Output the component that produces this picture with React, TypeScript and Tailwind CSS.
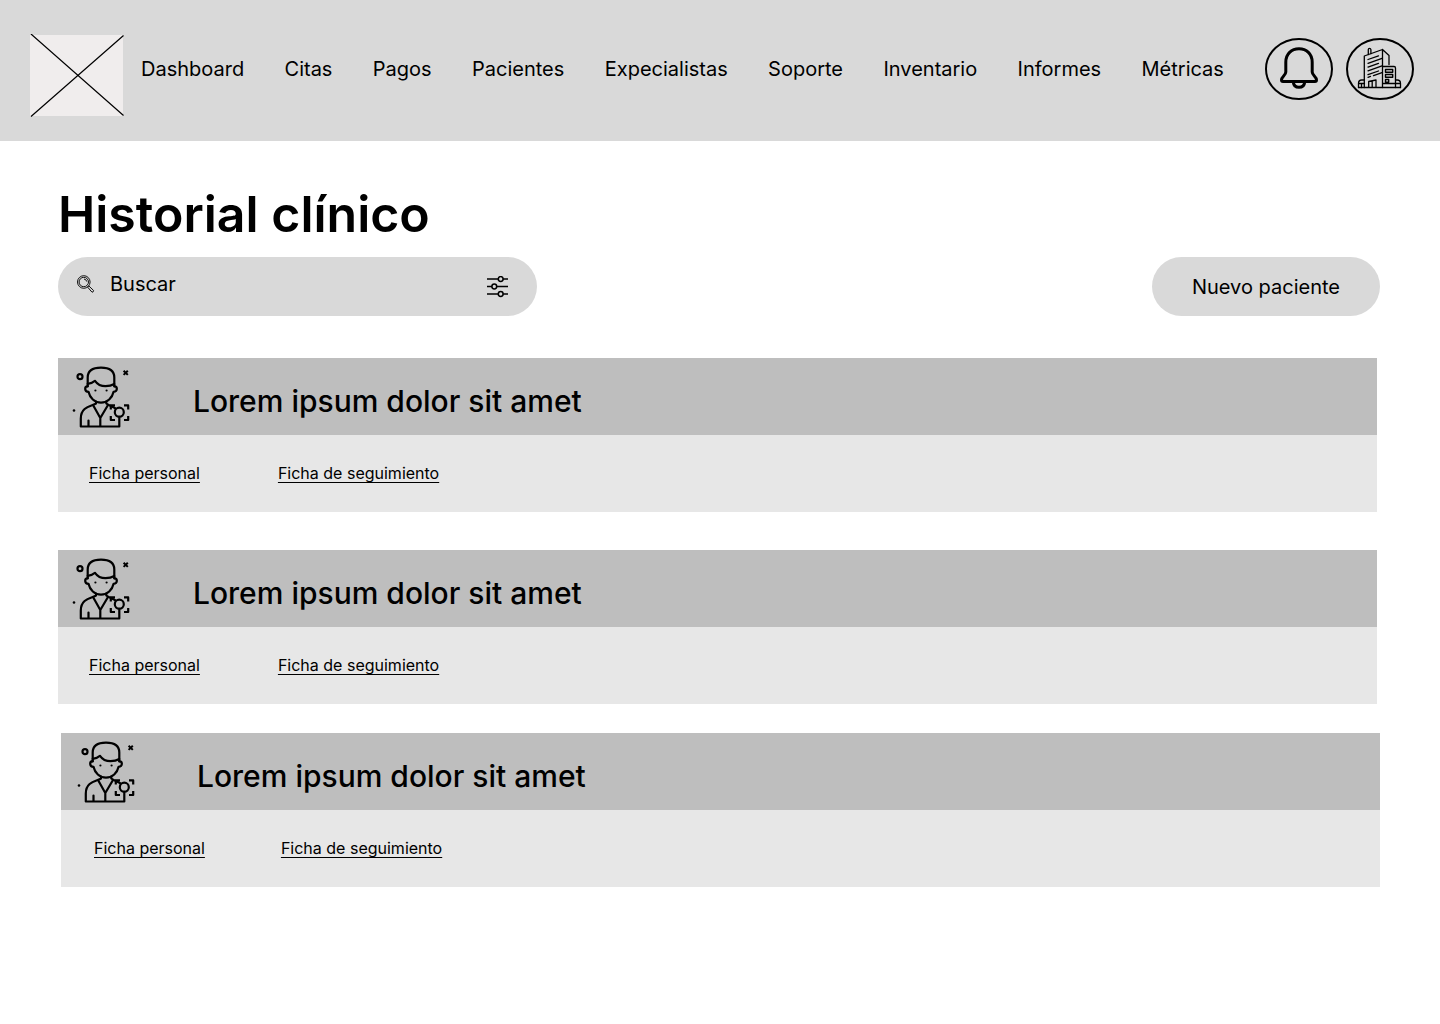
import React from "react";

const NAV = ["Dashboard", "Citas", "Pagos", "Pacientes", "Expecialistas", "Soporte", "Inventario", "Informes", "Métricas"];

function Logo() {
  return (
    <svg className="h-[83px] w-[94px] shrink-0" viewBox="0 0 94 83" fill="none" role="img" aria-label="Logo">
      <rect x="0" y="1" width="93" height="81" fill="#f0eded" />
      <path d="M1 0L93.5 81.5M1 82.5L93.5 1.5" stroke="#000" strokeWidth="1.2" />
    </svg>
  );
}

function BellIcon() {
  return (
    <svg className="h-[62px] w-[68px]" viewBox="0 0 68 62" fill="none" stroke="#000" aria-hidden="true">
      <ellipse cx="34" cy="31" rx="33" ry="30" strokeWidth="2" />
      <path
        d="M20.8 24.2C20.8 16 26.5 10.8 34 10.8S47.2 16 47.2 24.2V34C47.2 37.5 51.5 38.5 51.5 42C51.5 43 51 43.4 50 43.4H18C17 43.4 16.5 43 16.5 42C16.5 38.5 20.8 37.5 20.8 34Z"
        strokeWidth="3"
        strokeLinejoin="round"
      />
      <path d="M28.3 44C28.6 47.5 30.8 49.3 34 49.3S39.4 47.5 39.7 44" strokeWidth="3" />
    </svg>
  );
}

function BuildingIcon() {
  return (
    <svg className="h-[62px] w-[68px]" viewBox="0 0 68 62" fill="none" stroke="#000" aria-hidden="true">
      <ellipse cx="34" cy="31" rx="33" ry="30" strokeWidth="2" />
      <g strokeWidth="1.3" strokeLinejoin="round" strokeLinecap="round">
        <path d="M18.3 49.5V18L36.5 11.5V49.5M36.5 11.5L43 17.5V26.5" />
        <path d="M22.3 16.5V11.5Q22.3 10.3 23.5 10.3T24.9 11.5V15.7" />
        <path d="M22 21.5L32.5 17.8M22 25.3L36 20.3M22 29.1L32.5 25.4M22 32.9L36 27.9M22 36.7L32.5 33M27.5 37.7L36 34.7M22 39.3L24.5 38.4" />
        <path d="M37 28.5H48Q49.5 28.5 49.5 30V49.5" />
        <path d="M39.5 31.5H46.7V34.2H39.5ZM39.5 36.5H46.7V39.2H39.5ZM39.5 41.5H42.7V44.2H39.5Z" strokeWidth="1.4" />
        <path d="M12.5 49.5V45.5C12.5 43.2 14 42 15.8 42H18.5M12.5 45.5H18.5M15.5 45.5V49.5" />
        <path d="M49.5 42H51.2C53.2 42 54.5 43.3 54.5 45.5V49.5M49.5 45.5H54.5M37 45.5H49.5" />
        <path d="M22.7 49.5V43.5L30 42V49.5M26.2 43V49.5M12.5 49.5H54.5" />
      </g>
    </svg>
  );
}

function SearchIcon() {
  return (
    <svg className="h-[19px] w-[19px] shrink-0" viewBox="0 0 19 19" fill="none" stroke="#111" strokeWidth="1" aria-hidden="true">
      <circle cx="7.8" cy="7" r="6.3" />
      <circle cx="7.8" cy="7" r="4.7" />
      <path d="M8 4Q10.4 4.4 10.8 6.6M11.6 12.1L12.8 10.9L17.6 15.5Q17.6 17.2 16 17.2Z" />
    </svg>
  );
}

function FilterIcon() {
  return (
    <svg className="h-[22px] w-[22px]" viewBox="0 0 22 22" fill="none" stroke="#000" strokeWidth="1.5" aria-hidden="true">
      <path d="M0 3H11M16 3H21M0 10.5H5M10 10.5H21M0 18H11M16 18H21" />
      <circle cx="13.7" cy="3" r="2.4" />
      <circle cx="7.3" cy="10.5" r="2.4" />
      <circle cx="13.7" cy="18" r="2.4" />
    </svg>
  );
}

function PatientIcon() {
  return (
    <svg className="h-16 w-[60px] shrink-0" viewBox="0 0 60 64" fill="none" stroke="#000" strokeWidth="2.2" strokeLinecap="round" strokeLinejoin="round" aria-hidden="true">
      <circle cx="8" cy="11.7" r="2.5" />
      <path d="M51.6 5.7L55.8 9.9M55.8 5.7L51.6 9.9" strokeWidth="2" strokeLinecap="butt" />
      <circle cx="2" cy="45.5" r="1.3" fill="#000" stroke="none" />
      <path d="M15.7 21.5V12.5C15.7 5.5 21 2.7 29 2.7S42.3 5.5 42.3 12.5V21.5" />
      <path d="M15.7 18.8C18.5 18.6 21.3 17.5 23 15.8C25.5 19.4 29 21.2 33.5 21.2C37 21.2 40 20.4 42.3 19" />
      <path d="M15.7 21.2C12.2 21.6 12.3 26.5 16.5 26.8C17.8 32.8 22.6 37.7 29 37.7S40.3 32.8 41.6 26.8C45.8 26.5 45.8 21.6 42.3 21.2" />
      <circle cx="23.4" cy="25.5" r="1.1" fill="#000" stroke="none" />
      <circle cx="34.6" cy="25.5" r="1.1" fill="#000" stroke="none" />
      <path d="M24 36.5V38.5C20 41.2 8.8 41.2 8.8 53.5V61.5H47.3V52" />
      <path d="M34.3 36.5V38.5C37 40.7 40.5 41.7 43.5 43.5" />
      <path d="M21.3 40.5L28.3 53L35.7 40.5M28.3 53V61M16.5 55.5V61" />
      <circle cx="47.3" cy="47.2" r="4.5" />
      <path d="M38.8 44.4V40.4H43M52 40.4H56.2V44.4M38.8 51V55H43M52 55H56.2V51" strokeLinecap="butt" />
    </svg>
  );
}

type CardProps = { className: string; headClass: string; linksClass: string };

function PatientCard({ className, headClass, linksClass }: CardProps) {
  return (
    <article className={className}>
      <div className={`flex h-[77px] items-center bg-[#bebebe] ${headClass}`}>
        <PatientIcon />
        <h2 className="pt-2 text-[30px] leading-9 font-medium">Lorem ipsum dolor sit amet</h2>
      </div>
      <div className={`flex h-[77px] items-center bg-[#e7e7e7] pb-0.5 text-base underline-offset-3 ${linksClass}`}>
        <a href="#ficha-personal" className="underline [text-decoration-skip-ink:none]">Ficha personal</a>
        <a href="#ficha-seguimiento" className="underline [text-decoration-skip-ink:none]">Ficha de seguimiento</a>
      </div>
    </article>
  );
}

export default function App() {
  return (
    <div className="min-h-screen bg-white font-['Inter',sans-serif] text-black">
      <header className="flex items-start bg-[#d9d9d9] pt-[34px] pr-[26px] pb-6 pl-[30px]">
        <Logo />
        <nav className="mt-1 mr-[41px] ml-[17px] flex h-[62px] flex-1 items-center justify-between text-xl">
          {NAV.map((item) => (
            <a key={item} href={`#${item.toLowerCase()}`}>{item}</a>
          ))}
        </nav>
        <div className="mt-1 flex gap-[13px]">
          <button type="button" aria-label="Notificaciones"><BellIcon /></button>
          <button type="button" aria-label="Clínica"><BuildingIcon /></button>
        </div>
      </header>

      <main className="pt-[42px] pr-[60px] pb-10 pl-[58px]">
        <h1 className="text-[50px] leading-[62px] font-semibold">Historial clínico</h1>
        <div className="mt-3 flex items-center justify-between">
          <form role="search" className="flex h-[59px] w-[479px] items-center rounded-full bg-[#d9d9d9] pr-7 pl-[18px]">
            <div className="flex flex-1 items-center gap-[15px] pb-[5px]">
              <SearchIcon />
              <input
                type="text"
                aria-label="Buscar"
                placeholder="Buscar"
                className="w-full bg-transparent text-xl outline-none placeholder:text-black"
              />
            </div>
            <button type="button" aria-label="Filtros"><FilterIcon /></button>
          </form>
          <button type="button" className="h-[59px] rounded-full bg-[#d9d9d9] px-10 text-xl">Nuevo paciente</button>
        </div>

        <section className="mt-[42px]" aria-label="Pacientes">
          <PatientCard className="mr-[3px]" headClass="gap-[61px] pl-[14px]" linksClass="gap-[78px] pl-[31px]" />
          <PatientCard className="mt-[38px] mr-[3px]" headClass="gap-[61px] pl-[14px]" linksClass="gap-[78px] pl-[31px]" />
          <PatientCard className="mt-[29px] ml-[3px]" headClass="gap-[60px] pl-4" linksClass="gap-[76px] pl-[33px]" />
        </section>
      </main>
    </div>
  );
}
